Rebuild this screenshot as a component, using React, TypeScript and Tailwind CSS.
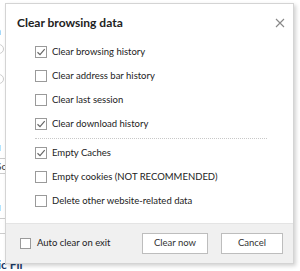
import React from "react";

const font = { fontFamily: 'Lato, "Noto Sans", Arial, sans-serif' };

const Box: React.FC<{ checked?: boolean; small?: boolean }> = ({ checked, small }) => (
  <span
    className={`flex items-center justify-center shrink-0 border border-[#9a9a9a] bg-white ${
      small ? "w-[11px] h-[11px]" : "w-[12px] h-[12px]"
    }`}
  >
    {checked && (
      <svg width="10" height="10" viewBox="0 0 10 10" fill="none">
        <path d="M1.5 5.2 L4 7.6 L8.7 2.2" stroke="#666" strokeWidth="1.2" />
      </svg>
    )}
  </span>
);

const Row: React.FC<{ label: string; checked?: boolean }> = ({ label, checked }) => (
  <div className="flex items-center h-[24px] gap-[5px]">
    <Box checked={checked} />
    <span className="text-[9.5px] text-[#222]">{label}</span>
  </div>
);

export default function App() {
  return (
    <div className="relative w-[300px] h-[271px] overflow-hidden bg-white" style={font}>
      {/* page behind the dialog */}
      <div className="flex flex-col text-[#333] font-bold text-[12px] -ml-[6px]">
        <div className="mt-[22px] h-[14px]">n</div>
        <div className="mt-[8px] w-[10px] h-[10px] rounded-full border border-[#ccc]" />
        <div className="mt-[20px] w-[10px] h-[10px] rounded-full border border-[#ccc]" />
        <div className="mt-[54px] h-[14px]">u</div>
        <div className="mt-[6px] w-[14px] h-[16px] border border-[#ccc] text-[10px] font-normal pl-[1px]">Sc</div>
        <div className="mt-[24px] h-[14px]">u</div>
        <div className="mt-[6px] w-[14px] h-[16px] border border-[#ccc]" />
        <div className="mt-[22px] text-[#1a3a6a] text-[12px] pl-[4px]">ic Fil</div>
      </div>

      {/* dialog */}
      <div className="absolute left-[5px] top-[3px] w-[289px] h-[261px] bg-white border border-[#d4d4d4] shadow-[2px_2px_4px_rgba(0,0,0,0.18)] flex flex-col">
        <div className="flex items-start justify-between pl-[11px] pr-[8px] pt-[10px]">
          <span className="text-[12px] font-bold text-[#222]">Clear browsing data</span>
          <svg width="10" height="10" viewBox="0 0 10 10" className="mt-[4px]">
            <path d="M1 1 L9 9 M9 1 L1 9" stroke="#888" strokeWidth="1.1" />
          </svg>
        </div>
        <div className="flex flex-col pl-[29px] pr-[26px] pt-[8px]">
          <Row label="Clear browsing history" checked />
          <Row label="Clear address bar history" />
          <Row label="Clear last session" />
          <Row label="Clear download history" checked />
          <div className="my-[2px] border-t border-dotted border-[#c8c8c8]" />
          <Row label="Empty Caches" checked />
          <Row label="Empty cookies (NOT RECOMMENDED)" />
          <Row label="Delete other website-related data" />
        </div>
        <div className="mt-auto h-[40px] bg-[#f0f0f0] border-t border-[#e4e4e4] flex items-center pl-[14px] pr-[10px]">
          <Box small />
          <span className="ml-[6px] text-[9.5px] text-[#222]">Auto clear on exit</span>
          <button className="ml-auto w-[66px] h-[21px] bg-white border border-[#bdbdbd] text-[9.5px] text-[#333]">
            Clear now
          </button>
          <button className="ml-[13px] w-[62px] h-[21px] bg-white border border-[#bdbdbd] text-[9.5px] text-[#333]">
            Cancel
          </button>
        </div>
      </div>
    </div>
  );
}
